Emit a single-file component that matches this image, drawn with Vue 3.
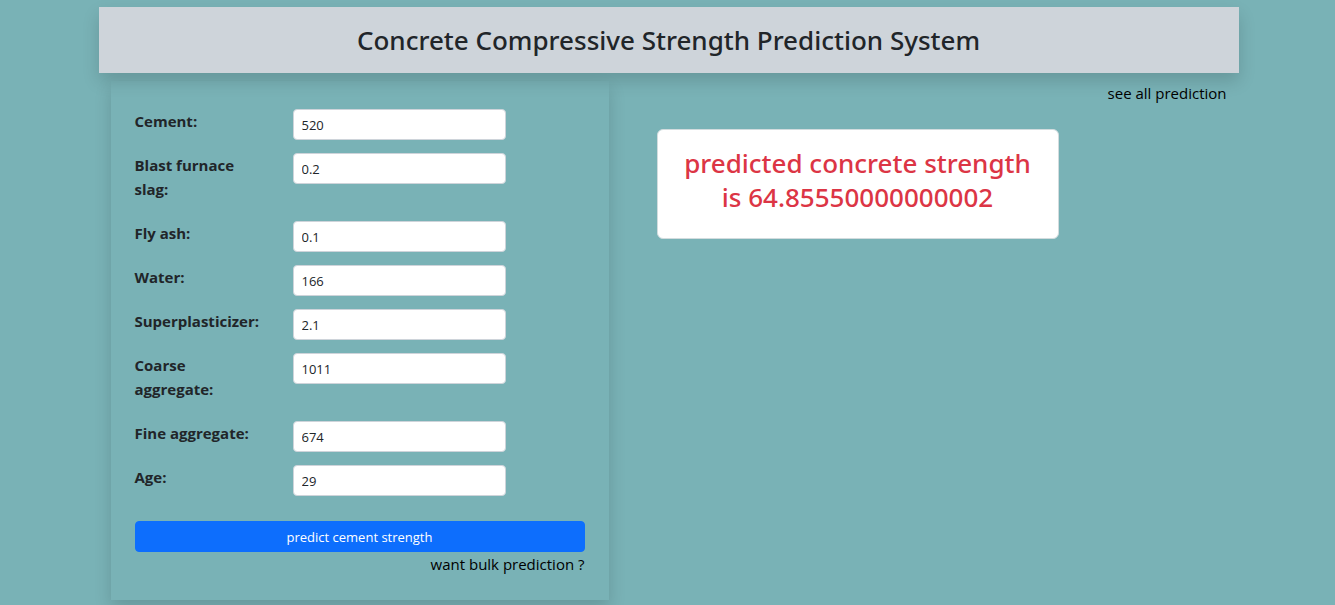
<script setup>
import { reactive } from 'vue'

const fields = reactive([
  { id: 'cement', label: 'Cement:', value: '520' },
  { id: 'slag', label: 'Blast furnace slag:', value: '0.2' },
  { id: 'fly-ash', label: 'Fly ash:', value: '0.1' },
  { id: 'water', label: 'Water:', value: '166' },
  { id: 'superplasticizer', label: 'Superplasticizer:', value: '2.1' },
  { id: 'coarse', label: 'Coarse aggregate:', value: '1011' },
  { id: 'fine', label: 'Fine aggregate:', value: '674' },
  { id: 'age', label: 'Age:', value: '29' }
])
</script>

<template>
  <div class="page">
    <div class="container">
      <header class="banner">
        <h1>Concrete Compressive Strength Prediction System</h1>
      </header>
      <main class="columns">
        <form class="panel" @submit.prevent>
          <div v-for="field in fields" :key="field.id" class="field">
            <label :for="field.id">{{ field.label }}</label>
            <input :id="field.id" v-model="field.value" type="text" />
          </div>
          <button type="submit">predict cement strength</button>
          <a class="bulk" href="#bulk">want bulk prediction ?</a>
        </form>
        <section class="side">
          <a class="all" href="#all">see all prediction</a>
          <div class="result">
            <h2>predicted concrete strength is 64.85550000000002</h2>
          </div>
        </section>
      </main>
    </div>
  </div>
</template>

<style>
body {
  background: #79b2b6;
}
</style>

<style scoped>
.page,
.page * {
  box-sizing: border-box;
}
.page {
  min-height: 100vh;
  padding: 7px 0 4px 2px;
  color: #212529;
  font: 16px/24px "Segoe UI", "Open Sans", "Noto Sans", sans-serif;
}
.container {
  max-width: 1140px;
  margin: 0 auto;
}
.banner {
  padding: 16px;
  background: #ced4da;
  text-align: center;
  box-shadow: 0 8px 16px rgba(0, 0, 0, 0.15);
}
h1,
h2 {
  margin: 0;
  font-family: "Segoe UI", "Noto Sans", "Open Sans", sans-serif;
  font-size: 26px;
  line-height: 34px;
  font-weight: 500;
}
.columns {
  display: flex;
  align-items: flex-start;
  padding: 8px 12px 0;
}
.panel {
  display: flex;
  flex-direction: column;
  width: 498px;
  padding: 28px 24px 24px;
  box-shadow: 0 8px 16px rgba(0, 0, 0, 0.15);
}
.field {
  display: grid;
  grid-template-columns: 130px 213px;
  column-gap: 28px;
  align-items: start;
  margin-bottom: 13px;
}
label {
  padding-bottom: 7px;
  font-weight: 700;
  font-size: 15px;
}
input {
  height: 31px;
  width: 100%;
  padding: 4px 8px;
  border: 1px solid #ced4da;
  border-radius: 4px;
  background: #fff;
  color: #212529;
  font: inherit;
  font-size: 13px;
}
button {
  height: 31px;
  margin-top: 12px;
  border: 1px solid #0d6efd;
  border-radius: 4px;
  background: #0d6efd;
  color: #fff;
  font: inherit;
  font-size: 13px;
}
a {
  color: #000;
  text-decoration: none;
  font-size: 15px;
}
.bulk {
  align-self: flex-end;
}
.side {
  display: flex;
  flex: 1;
  flex-direction: column;
}
.all {
  align-self: flex-end;
}
.result {
  width: 402px;
  margin: 24px 0 0 48px;
  padding: 16px 16px 24px;
  border: 1px solid #d2dcde;
  border-radius: 6px;
  background: #fff;
  color: #dc3545;
  text-align: center;
}
</style>
